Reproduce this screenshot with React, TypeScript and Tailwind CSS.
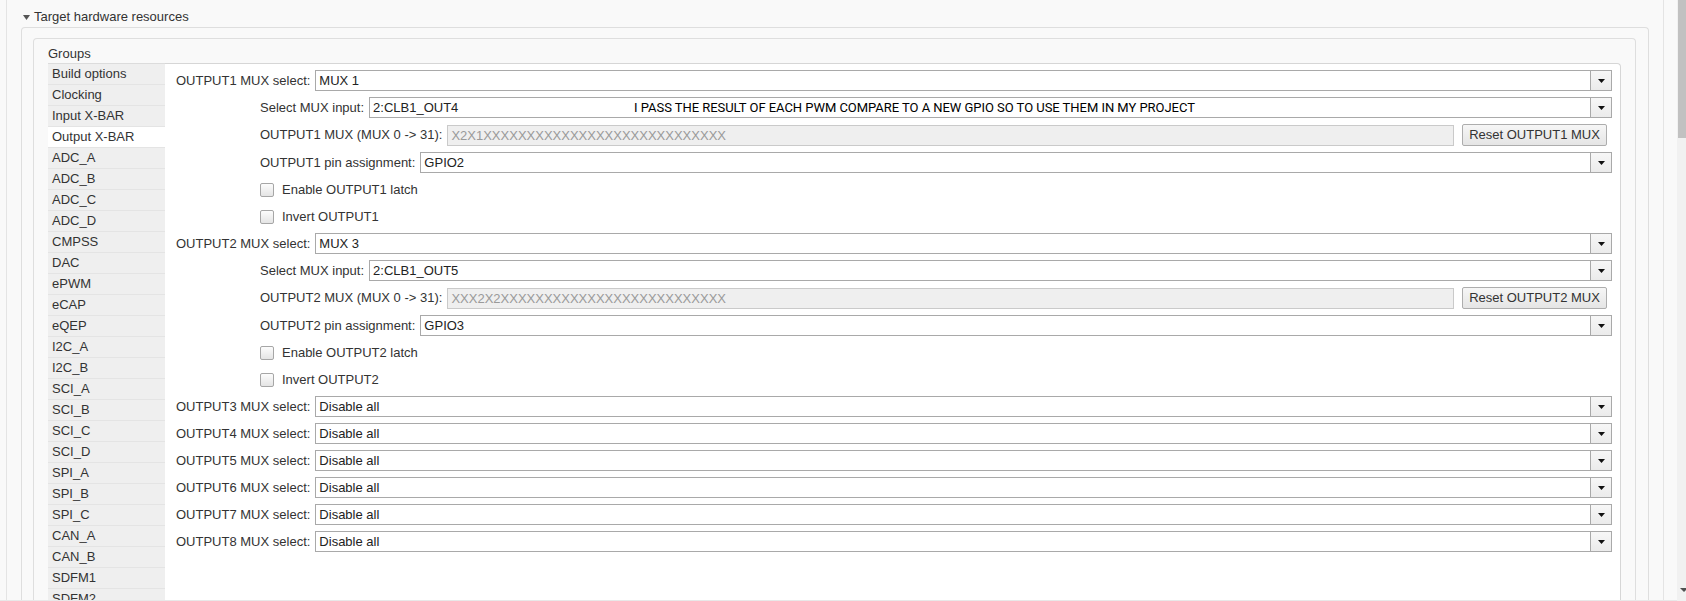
import React from 'react';

const groups = [
  'Build options',
  'Clocking',
  'Input X-BAR',
  'Output X-BAR',
  'ADC_A',
  'ADC_B',
  'ADC_C',
  'ADC_D',
  'CMPSS',
  'DAC',
  'ePWM',
  'eCAP',
  'eQEP',
  'I2C_A',
  'I2C_B',
  'SCI_A',
  'SCI_B',
  'SCI_C',
  'SCI_D',
  'SPI_A',
  'SPI_B',
  'SPI_C',
  'CAN_A',
  'CAN_B',
  'SDFM1',
  'SDFM2',
];

const outputs = [
  {
    n: 1,
    mux: 'MUX 1',
    input: '2:CLB1_OUT4',
    bits: 'X2X1' + 'X'.repeat(28),
    pin: 'GPIO2',
    note: 'I PASS THE RESULT OF EACH PWM COMPARE TO A NEW GPIO SO TO USE THEM IN MY PROJECT',
  },
  { n: 2, mux: 'MUX 3', input: '2:CLB1_OUT5', bits: 'XXX2X2' + 'X'.repeat(26), pin: 'GPIO3' },
];

function Arrow() {
  return (
    <svg width="7" height="4" viewBox="0 0 7 4">
      <polygon points="0,0 7,0 3.5,4" fill="#111" />
    </svg>
  );
}

function Select({ value, note }: { value: string; note?: string }) {
  return (
    <div className="relative flex h-[21px] flex-1 border border-[#a9a9a9] bg-white">
      <span className="flex-1 truncate pl-[3px] leading-[19px] text-[#222]">{value}</span>
      {note && (
        <span className="absolute left-[264px] top-1/2 -translate-y-1/2 whitespace-nowrap font-['Roboto',sans-serif] text-[13px] tracking-[-0.04px] text-black">
          {note}
        </span>
      )}
      <span className="flex w-[21px] items-center justify-center border-l border-[#a9a9a9] bg-linear-to-b from-[#f7f7f7] to-[#ebebeb]">
        <Arrow />
      </span>
    </div>
  );
}

function SelectRow({ label, value, sub, note }: { label: string; value: string; sub?: boolean; note?: string }) {
  return (
    <div className={`flex h-[21px] items-center ${sub ? 'pl-[84px]' : ''}`}>
      <span className="mr-[5px] whitespace-nowrap">{label}</span>
      <Select value={value} note={note} />
    </div>
  );
}

function CheckRow({ label }: { label: string }) {
  return (
    <div className="flex h-[21px] items-center pl-[84px]">
      <span className="h-[14px] w-[14px] rounded-[2px] border border-[#a6a6a6] bg-linear-to-b from-[#fcfcfc] to-[#e4e4e4]" />
      <span className="ml-[8px]">{label}</span>
    </div>
  );
}

function OutputBlock({ o }: { o: (typeof outputs)[number] }) {
  return (
    <>
      <SelectRow label={`OUTPUT${o.n} MUX select:`} value={o.mux} />
      <SelectRow label="Select MUX input:" value={o.input} sub note={o.note} />
      <div className="flex h-[22px] items-center pl-[84px]">
        <span className="mr-[5px] whitespace-nowrap">{`OUTPUT${o.n} MUX (MUX 0 -> 31):`}</span>
        <div className="h-[21px] flex-1 border border-[#cacaca] bg-[#efefef] pl-[3px] leading-[19px] text-[#9a9a9a]">
          {o.bits}
        </div>
        <button className="ml-[8px] mr-[5px] h-[22px] w-[145px] rounded-[2px] border border-[#adadad] bg-linear-to-b from-[#f6f6f6] to-[#e5e5e5] text-[13px] text-[#333]">
          {`Reset OUTPUT${o.n} MUX`}
        </button>
      </div>
      <SelectRow label={`OUTPUT${o.n} pin assignment:`} value={o.pin} sub />
      <CheckRow label={`Enable OUTPUT${o.n} latch`} />
      <CheckRow label={`Invert OUTPUT${o.n}`} />
    </>
  );
}

export default function App() {
  return (
    <div className="flex h-[601px] w-[1686px] overflow-hidden bg-[#f9f9f9] font-['Liberation_Sans',Arial,sans-serif] text-[13px] text-[#333]">
      <div className="flex flex-1 flex-col">
        <div className="h-[600px] overflow-hidden">
          <div className="ml-[6px] h-full w-[1658px] border-x border-[#e4e4e4] px-[14px]">
            <div className="flex h-[27px] items-center pl-[2px] pt-[7px]">
              <svg width="7" height="5" viewBox="0 0 7 5">
                <polygon points="0,0 7,0 3.5,5" fill="#555" />
              </svg>
              <span className="ml-[4px]">Target hardware resources</span>
            </div>
            <div className="h-[600px] rounded-t-[4px] border border-b-0 border-[#dedede] pl-[11px] pr-[12px] pt-[10px]">
              <div className="h-[600px] rounded-t-[4px] border border-b-0 border-[#dedede] px-[14px]">
                <div className="h-[24px] pt-[6px] leading-[17px]">Groups</div>
                <div className="flex">
                  <div className="w-[117px] border-t border-[#dcdcdc]">
                    {groups.map((g) => (
                      <div
                        key={g}
                        className={`h-[21px] border-b border-[#e4e4e4] pl-[4px] leading-[20px] ${
                          g === 'Output X-BAR' ? 'bg-white' : 'bg-[#efefef]'
                        }`}
                      >
                        {g}
                      </div>
                    ))}
                  </div>
                  <div className="flex h-[560px] flex-1 flex-col gap-[6px] rounded-tr-[4px] border-r border-t border-[#d6d6d6] bg-white pl-[11px] pr-[8px] pt-[6px]">
                    {outputs.map((o) => (
                      <OutputBlock key={o.n} o={o} />
                    ))}
                    {[3, 4, 5, 6, 7, 8].map((n) => (
                      <SelectRow key={n} label={`OUTPUT${n} MUX select:`} value="Disable all" />
                    ))}
                  </div>
                </div>
              </div>
            </div>
          </div>
        </div>
        <div className="h-px bg-[#e8e8e8]" />
      </div>
      <div className="flex w-[9px] flex-col bg-[#f1f1f1]">
        <div className="ml-px h-[138px] bg-[#c1c1c1]" />
        <div className="flex-1" />
        <svg className="mb-[9px] ml-[3px]" width="6" height="4" viewBox="0 0 6 4">
          <polygon points="0,0 8,0 4,4" fill="#505050" />
        </svg>
      </div>
    </div>
  );
}
